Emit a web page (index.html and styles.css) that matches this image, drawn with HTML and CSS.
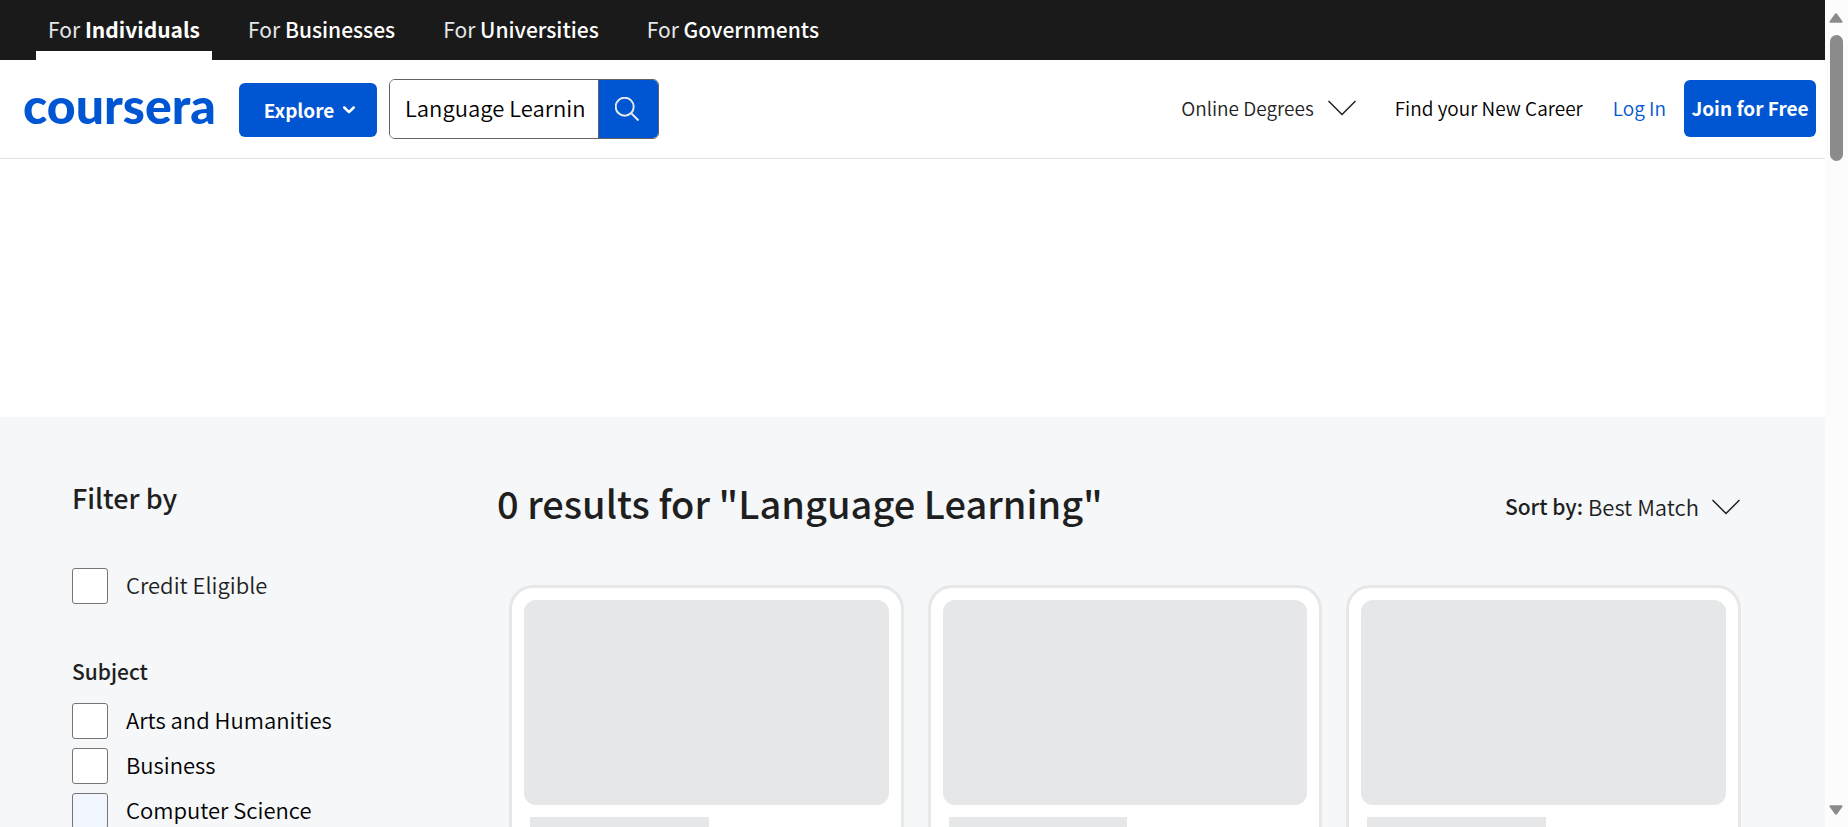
FILE: index.html
```html
<!DOCTYPE html>
<html lang="en">
<head>
<meta charset="utf-8">
<meta name="viewport" content="width=device-width, initial-scale=1">
<title>Language Learning | Coursera</title>
<link rel="stylesheet" href="styles.css">
</head>
<body>
<div class="page">
  <nav class="audience" aria-label="Audience">
    <a class="audience-link is-active" href="#"><span class="audience-for">For</span> <strong>Individuals</strong></a>
    <a class="audience-link" href="#"><span class="audience-for">For</span> Businesses</a>
    <a class="audience-link" href="#"><span class="audience-for">For</span> Universities</a>
    <a class="audience-link" href="#"><span class="audience-for">For</span> Governments</a>
  </nav>

  <header class="header">
    <a class="logo" href="#">coursera</a>
    <button class="explore" type="button">Explore
      <svg class="explore-icon" viewBox="0 0 12 8" aria-hidden="true"><path d="M1.300 1.500 6 6.200l4.700-4.700"/></svg>
    </button>
    <form class="search" role="search">
      <input class="search-input" type="text" value="Language Learning" aria-label="Search">
      <button class="search-button" type="button" aria-label="Submit search">
        <svg class="search-icon" viewBox="0 0 24 24" aria-hidden="true"><circle cx="9.700" cy="9.700" r="9"/><path d="m16 16 7.500 7.500"/></svg>
      </button>
    </form>
    <div class="header-links">
      <button class="degrees" type="button">Online Degrees
        <svg class="chevron" viewBox="0 0 28 16" aria-hidden="true"><path d="m.5 1 13.500 13.500L27.500 1"/></svg>
      </button>
      <a class="career" href="#">Find your New Career</a>
      <a class="login" href="#">Log In</a>
      <button class="join" type="button">Join for Free</button>
    </div>
  </header>

  <div class="banner"></div>

  <main class="content">
    <aside class="filters">
      <h2 class="filters-title">Filter by</h2>
      <label class="option option-credit"><input class="box" type="checkbox"><span class="option-text">Credit Eligible</span></label>
      <fieldset class="group">
        <legend class="group-title">Subject</legend>
        <label class="option"><input class="box" type="checkbox"><span class="option-text">Arts and Humanities</span></label>
        <label class="option"><input class="box" type="checkbox"><span class="option-text">Business</span></label>
        <label class="option"><input class="box box-hover" type="checkbox"><span class="option-text">Computer Science</span></label>
      </fieldset>
    </aside>
    <section class="results">
      <div class="results-head">
        <h1 class="results-title">0 results for "Language Learning"</h1>
        <div class="sort">
          <label class="sort-label" for="sort">Sort by:</label>
          <select class="sort-select" id="sort"><option>Best Match</option></select>
          <svg class="chevron" viewBox="0 0 28 16" aria-hidden="true"><path d="m.5 1 13.500 13.500L27.500 1"/></svg>
        </div>
      </div>
      <div class="cards">
        <div class="card"><div class="card-image"></div><div class="card-line"></div></div>
        <div class="card"><div class="card-image"></div><div class="card-line"></div></div>
        <div class="card"><div class="card-image"></div><div class="card-line"></div></div>
      </div>
    </section>
  </main>
</div>
<div class="scrollbar" aria-hidden="true">
  <svg class="scroll-arrow" viewBox="0 0 14 10"><path d="M7 1.200 12.600 8.800H1.400Z"/></svg>
  <div class="scroll-thumb"></div>
  <svg class="scroll-arrow scroll-down" viewBox="0 0 14 10"><path d="M7 8.800 1.400 1.200h11.200Z"/></svg>
</div>
</body>
</html>
```

FILE: styles.css
```css
* { box-sizing: border-box; }

body {
  margin: 0;
  display: flex;
  height: 100vh;
  overflow: hidden;
  background: #fff;
  color: #1f1f1f;
  font-family: "Noto Sans CJK SC", "Noto Sans", sans-serif;
  font-size: 22px;
  font-weight: 350;
  line-height: 32px;
}

a { color: inherit; text-decoration: none; }
button, input, select { font: inherit; color: inherit; }
button { padding: 0; border: 0; background: none; white-space: nowrap; }
svg { display: block; flex: none; fill: none; stroke: currentColor; }

.page { flex: 1; min-width: 0; height: 100%; overflow: hidden; }

.audience {
  display: flex;
  gap: 24px;
  height: 60px;
  padding: 0 36px;
  background: #1a1a1a;
  color: #fff;
  font-size: 21px;
  font-weight: 500;
}
.audience-link {
  padding: 13px 12px 6px;
  border-bottom: 9px solid transparent;
  white-space: nowrap;
}
.audience-for { color: #e5e7e8; font-weight: 400; }
.audience-link.is-active { border-bottom-color: #fff; }

.header {
  display: flex;
  align-items: center;
  height: 99px;
  padding: 0 9px 0 23px;
  border-bottom: 1px solid #e1e1e1;
}
.logo {
  width: 216px;
  padding-bottom: 8px;
  color: #0056d2;
  font-family: Lato, sans-serif;
  font-size: 50px;
  font-weight: 900;
  line-height: 48px;
}
.explore {
  display: flex;
  align-items: center;
  justify-content: center;
  gap: 9px;
  width: 138px;
  height: 54px;
  margin: 2px 12px 0 0;
  padding-left: 3px;
  border-radius: 6px;
  background: #0056d2;
  color: #fff;
  font-size: 19px;
  font-weight: 700;
}
.explore-icon { width: 12px; height: 8px; stroke-width: 2.500; stroke-linecap: round; stroke-linejoin: round; }

.search {
  display: flex;
  width: 270px;
  height: 60px;
  overflow: hidden;
  border: 1px solid #636363;
  border-radius: 6px;
}
.search-input {
  flex: 1;
  min-width: 0;
  padding: 0 14px 4px 15px;
  border: 0;
  outline: 0;
  background: #fff;
  color: #000;
}
.search-button {
  display: grid;
  place-items: center;
  width: 60px;
  padding-right: 4px;
  border-left: 1px solid #636363;
  background: #0056d2;
  color: #e5e7e8;
}
.search-icon { width: 24px; height: 24px; stroke-width: 2; }

.header-links {
  display: flex;
  align-items: center;
  margin-left: auto;
  padding-bottom: 2px;
  font-size: 19px;
  white-space: nowrap;
}
.degrees { display: flex; align-items: center; gap: 14px; margin-right: 39px; }
.chevron { width: 28px; height: 16px; stroke-width: 1.500; }
.career { margin-right: 30px; color: #000; }
.login { margin-right: 18px; color: #0056d2; }
.join {
  width: 132px;
  height: 57px;
  border-radius: 6px;
  background: #0056d2;
  color: #fff;
  font-weight: 700;
}

.banner { height: 258px; }

.content {
  display: flex;
  gap: 24px;
  min-height: 410px;
  padding: 60px 84px 60px 72px;
  background: #f5f7f9;
}
.filters { width: 401px; }
.filters-title { margin: 4px 0 54px; font-size: 27px; font-weight: 500; line-height: 33px; }
.option { display: flex; align-items: center; gap: 18px; height: 36px; margin-bottom: 9px; color: #000; }
.option-text { padding-bottom: 4px; }
.option-credit { margin-bottom: 51px; color: #1f1f1f; }
.box {
  appearance: none;
  width: 36px;
  height: 36px;
  margin: 0;
  border: 1px solid #757575;
  border-radius: 3px;
  background: #fff;
}
.box-hover { background: #f2f7ff; }
.group { margin: 0; padding: 0; border: 0; }
.group-title { padding: 0 0 16px; font-size: 21px; font-weight: 500; }

.results { flex: 1; min-width: 0; }
.results-head { display: flex; align-items: center; justify-content: space-between; height: 60px; }
.results-title { margin: 0; padding-bottom: 8px; font-size: 38px; font-weight: 500; line-height: 48px; white-space: nowrap; }
.sort { display: flex; align-items: center; padding-right: 1px; white-space: nowrap; }
.sort-label { margin-right: 5px; padding-bottom: 3px; font-size: 21px; font-weight: 500; }
.sort-select { appearance: none; margin-right: 13px; padding: 0 0 3px; border: 0; background: none; }

.cards { display: grid; grid-template-columns: repeat(3, 1fr); gap: 24px; padding: 48px 0 0 12px; }
.card { height: 480px; padding: 12px; border: 3px solid #e5e7e8; border-radius: 24px; background: #fff; }
.card-image { height: 205px; border-radius: 12px; background: #e5e7e8; }
.card-line { width: 49%; height: 24px; margin: 12px 6px; background: #e5e7e8; }

.scrollbar {
  display: flex;
  flex-direction: column;
  align-items: center;
  width: 23px;
  padding: 13px 1px 12px 0;
  background: #fcfcfc;
  color: #8b8b8b;
}
.scroll-arrow { width: 14px; height: 10px; fill: currentColor; stroke-width: 2; stroke-linejoin: round; }
.scroll-thumb { width: 13px; height: 126px; margin-top: 12px; border-radius: 7px; background: #8b8b8b; }
.scroll-down { margin-top: auto; }
```
